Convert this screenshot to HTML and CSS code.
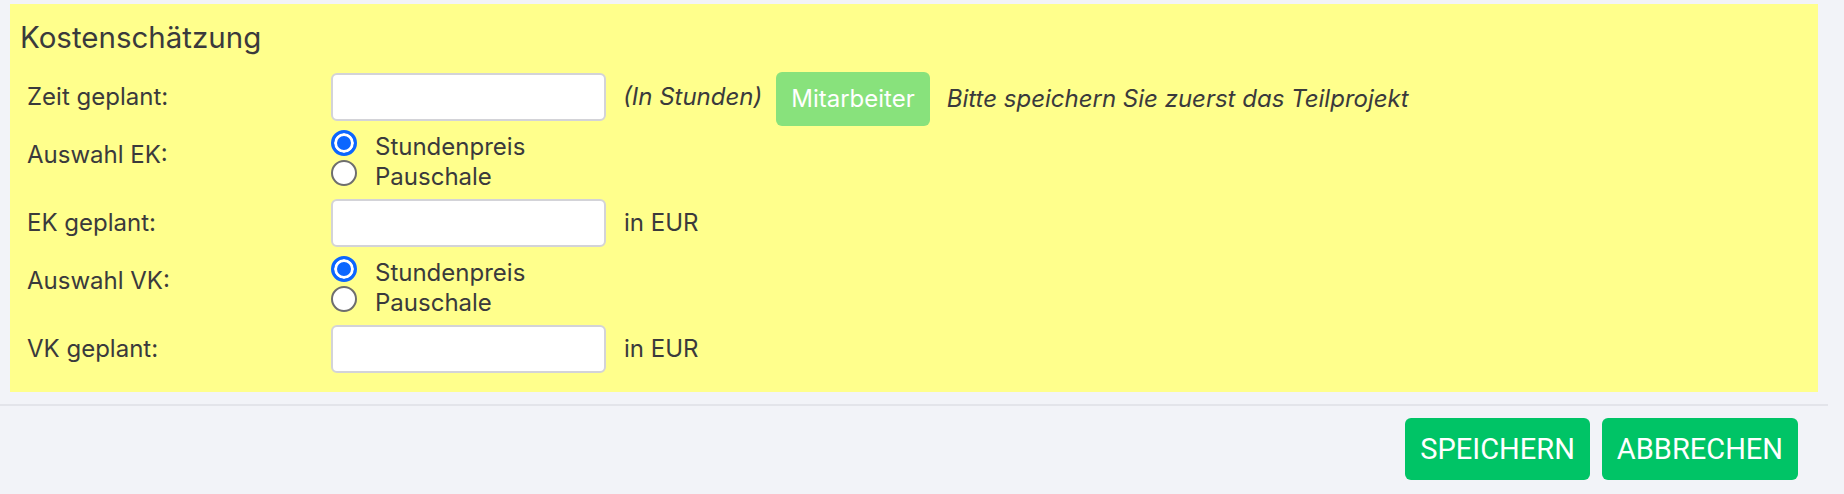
FILE: index.html
```html
<!DOCTYPE html>
<html lang="de">
<head>
<meta charset="utf-8">
<title>Kostenschätzung</title>
<link rel="stylesheet" href="styles.css">
</head>
<body>
<div class="page">
  <section class="panel">
    <h2 class="panel-title">Kostenschätzung</h2>
    <div class="form">
      <div class="row row-first">
        <label class="label label-input">Zeit geplant:</label>
        <div class="field">
          <input class="text-input" type="text">
          <span class="hint hint-italic">(In Stunden)</span>
          <button class="btn-staff" type="button">Mitarbeiter</button>
          <span class="note">Bitte speichern Sie zuerst das Teilprojekt</span>
        </div>
      </div>
      <div class="row row-radio-ek">
        <label class="label label-radio">Auswahl EK:</label>
        <div class="radio-group">
          <label class="radio-option"><span class="radio checked"></span><span class="radio-text">Stundenpreis</span></label>
          <label class="radio-option"><span class="radio"></span><span class="radio-text">Pauschale</span></label>
        </div>
      </div>
      <div class="row row-input-ek">
        <label class="label label-input">EK geplant:</label>
        <div class="field">
          <input class="text-input" type="text">
          <span class="hint">in EUR</span>
        </div>
      </div>
      <div class="row row-radio-vk">
        <label class="label label-radio">Auswahl VK:</label>
        <div class="radio-group">
          <label class="radio-option"><span class="radio checked"></span><span class="radio-text">Stundenpreis</span></label>
          <label class="radio-option"><span class="radio"></span><span class="radio-text">Pauschale</span></label>
        </div>
      </div>
      <div class="row row-input-vk">
        <label class="label label-input">VK geplant:</label>
        <div class="field">
          <input class="text-input" type="text">
          <span class="hint">in EUR</span>
        </div>
      </div>
    </div>
  </section>
  <footer class="actions">
    <button class="btn-action" type="button">SPEICHERN</button>
    <button class="btn-action" type="button">ABBRECHEN</button>
  </footer>
</div>
</body>
</html>
```
FILE: styles.css
```css
* { box-sizing: border-box; }

html, body {
  margin: 0;
  padding: 0;
  background: #f2f3f8;
}

body {
  font-family: Inter, "Noto Sans", sans-serif;
  color: #3a3a3c;
}

.page {
  margin-right: 16px;
}

.panel {
  margin: 4px 10px 0 10px;
  background: #ffff8c;
  padding: 16px 0 0 10px;
}

.panel-title {
  margin: 0;
  font-size: 29.5px;
  font-weight: 400;
  line-height: 34px;
  color: #3a3a3c;
}

.form {
  margin-top: 18px;
  padding-left: 7px;
}

.row {
  display: flex;
  align-items: flex-start;
}

.row-first { height: 54px; }
.row-radio-ek { height: 64px; }
.row-input-ek { height: 64px; padding-top: 9px; }
.row-radio-vk { height: 60px; }
.row-input-vk { height: 78px; padding-top: 11px; }

.row-first .label,
.row-first .text-input { margin-top: 1px; }

.label {
  width: 304px;
  flex: none;
  font-size: 24px;
}

.label-input {
  line-height: 48px;
}

.label-radio {
  line-height: 30px;
}

.row-radio-ek .label { margin-top: 14px; }
.row-radio-ek .radio-group { margin-top: 2px; }
.row-radio-vk .label { margin-top: 12px; }

.field {
  display: flex;
  align-items: flex-start;
}

.text-input {
  width: 275px;
  height: 48px;
  border: 2px solid #d3d3d8;
  border-radius: 6px;
  background: #fff;
  font: inherit;
  margin: 0;
  padding: 0 10px;
  outline: none;
}

.hint {
  font-size: 24px;
  line-height: 48px;
  margin-left: 18px;
}

.row-first .hint { margin-top: 1px; }

.hint-italic {
  font-style: italic;
  margin-left: 17px;
}

.btn-staff {
  margin-left: 14px;
  height: 54px;
  padding: 0 15px;
  border: none;
  border-radius: 6px;
  background: #88e27c;
  color: #fff;
  font-family: Inter, "Noto Sans", sans-serif;
  font-size: 24px;
  line-height: 54px;
}

.note {
  margin-left: 17px;
  font-size: 24px;
  font-style: italic;
  line-height: 54px;
}

.radio-group {
  display: flex;
  flex-direction: column;
}

.radio-option {
  display: flex;
  align-items: flex-start;
  gap: 18px;
  height: 30px;
  font-size: 24px;
}

.radio-text {
  line-height: 30px;
  margin-top: 4px;
}

.radio {
  width: 26px;
  height: 26px;
  margin-top: 2px;
  border-radius: 50%;
  border: 2px solid #6e6e6e;
  background: #fff;
  flex: none;
}

.radio.checked {
  border: 3px solid #0b66ff;
  background: #0b66ff;
  box-shadow: inset 0 0 0 3px #fff;
}

.actions {
  margin-top: 12px;
  border-top: 2px solid #e3e4ea;
  padding: 12px 30px 0 0;
  display: flex;
  justify-content: flex-end;
  gap: 12px;
}

.btn-action {
  height: 62px;
  padding: 0 15px;
  border: none;
  border-radius: 6px;
  background: #00c466;
  color: #fff;
  font-family: Roboto, "Liberation Sans", sans-serif;
  font-size: 29px;
  line-height: 62px;
}
```
